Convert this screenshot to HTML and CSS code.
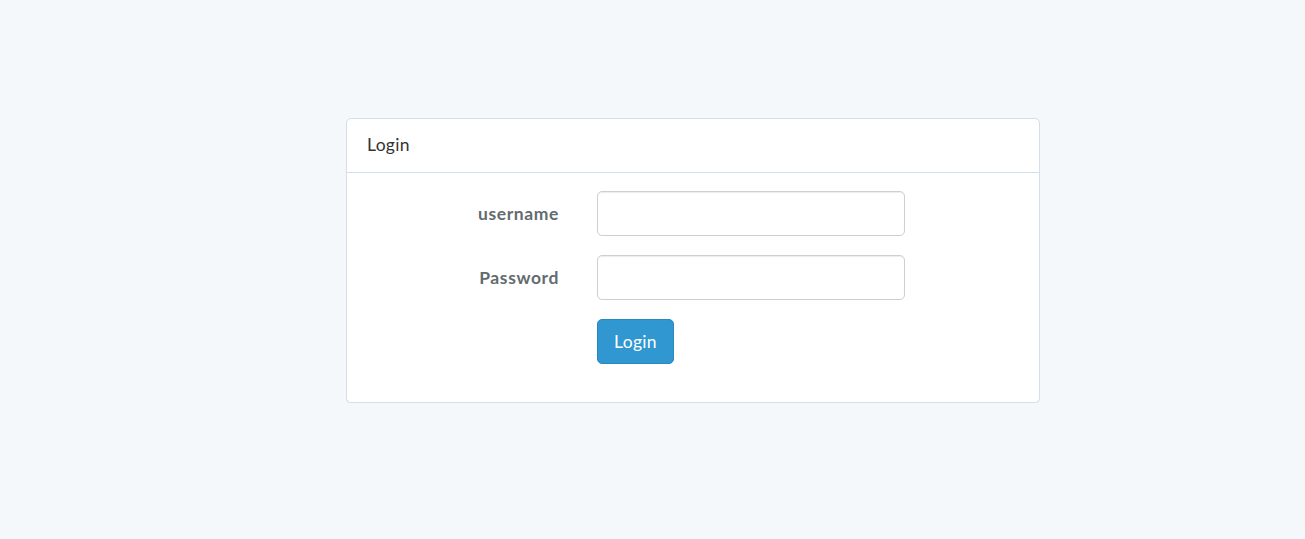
FILE: index.html
```html
<!DOCTYPE html>
<html lang="en">
<head>
  <meta charset="UTF-8" />
  <meta name="viewport" content="width=device-width, initial-scale=1.0" />
  <title>Login</title>
  <link rel="stylesheet" href="styles.css">
</head>
<body>
  <div class="container">
    <div class="panel">
      <div class="panel-heading">Login</div>
      <div class="panel-body">
        <form class="login-form">
          <div class="form-group">
            <label for="username">username</label>
            <input type="text" id="username" name="username" />
          </div>
          <div class="form-group">
            <label for="password">Password</label>
            <input type="password" id="password" name="password" />
          </div>
          <div class="form-group">
            <span class="spacer"></span>
            <button type="submit" class="btn-primary">Login</button>
          </div>
        </form>
      </div>
    </div>
  </div>
</body>
</html>
```

FILE: styles.css
```css
body {
  margin: 0;
  background-color: #f5f8fa;
  font-family: Lato, "Open Sans", sans-serif;
  font-size: 17.5px;
  line-height: 1.6;
  color: #636b6f;
}

.container {
  padding-top: 118px;
  padding-left: 346px;
}

.panel {
  width: 692px;
  background: #fff;
  border: 1px solid #d3e0e9;
  border-radius: 5px;
  box-shadow: 0 1px 1px rgba(0, 0, 0, 0.05);
}

.panel-heading {
  padding: 12px 19px 13px 20px;
  color: #333;
  border-bottom: 1px solid #d3e0e9;
  line-height: 28px;
  letter-spacing: 0.3px;
}

.panel-body {
  padding: 18px 19px 38px;
}

.login-form {
  display: flex;
  flex-direction: column;
  gap: 19px;
}

.form-group {
  display: flex;
  gap: 38px;
}

.form-group label,
.form-group .spacer {
  width: 193px;
  flex: none;
  text-align: right;
  font-weight: 700;
  line-height: 45px;
  letter-spacing: 0.6px;
}

.form-group input {
  box-sizing: border-box;
  width: 308px;
  height: 45px;
  padding: 7px 15px;
  border: 1px solid #ccd0d2;
  border-radius: 5px;
  box-shadow: inset 0 1px 1px rgba(0, 0, 0, 0.075);
  font: inherit;
  color: #555;
}

.btn-primary {
  box-sizing: border-box;
  height: 45px;
  width: 77px;
  padding: 0;
  background-color: #3097d1;
  border: 1px solid #2a88bd;
  border-radius: 5px;
  color: #fff;
  font: inherit;
  letter-spacing: 0.3px;
  cursor: pointer;
}
```
